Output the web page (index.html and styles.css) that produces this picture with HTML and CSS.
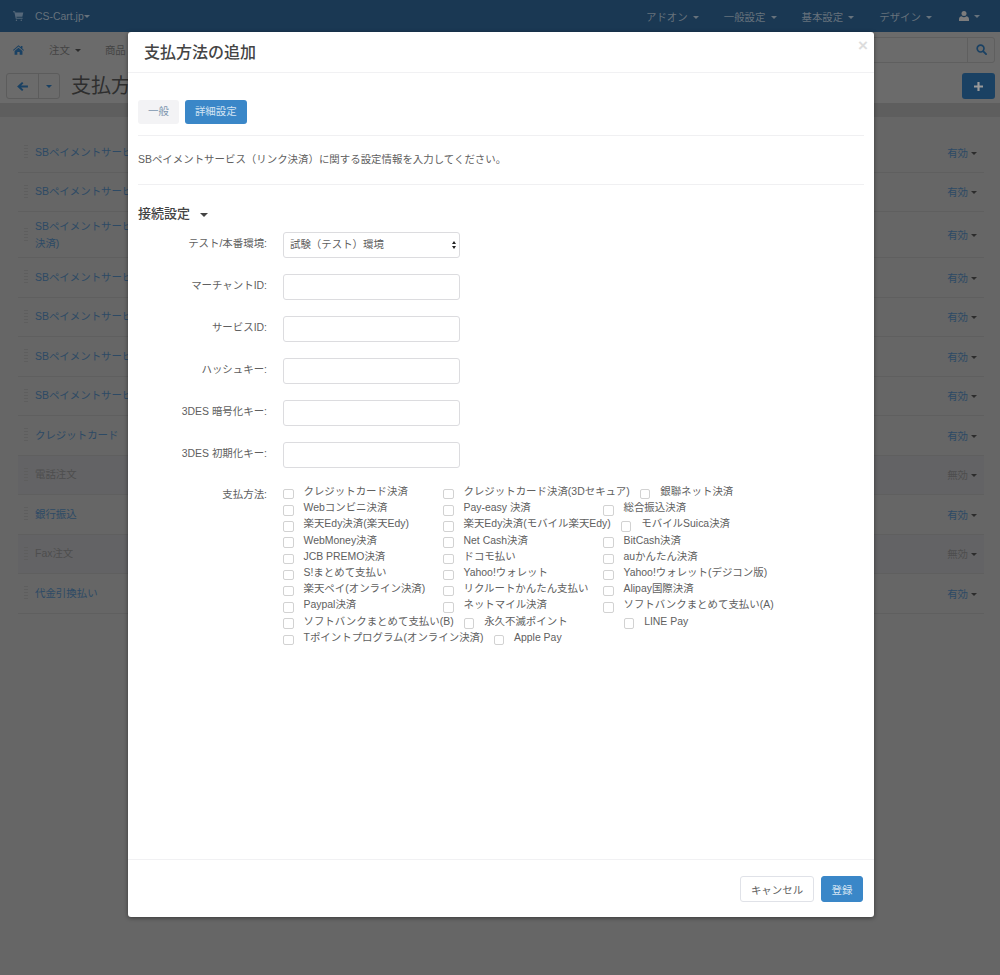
FILE: index.html
```html
<!DOCTYPE html>
<html lang="ja">
<head>
<meta charset="utf-8">
<title>支払方法の追加</title>
<link rel="stylesheet" href="styles.css">
</head>
<body>
<div class="page">
  <header class="topbar">
    <div class="brand">
      <svg class="ico-cart" viewBox="0 0 16 14"><path d="M0 0h3l.5 2H15l-1.4 6H5l.3 1.5H14V11H4L2 1.5H0zM5 12a1 1 0 1 0 .01 0zM12 12a1 1 0 1 0 .01 0z"/></svg>
      <span class="brand-name">CS-Cart.jp</span><i class="caret caret-top tight"></i>
    </div>
    <nav class="topmenu">
      <span class="topitem">アドオン<i class="caret caret-top"></i></span>
      <span class="topitem">一般設定<i class="caret caret-top"></i></span>
      <span class="topitem">基本設定<i class="caret caret-top"></i></span>
      <span class="topitem">デザイン<i class="caret caret-top"></i></span>
      <span class="topitem user">
        <svg class="ico-user" viewBox="0 0 12 12"><circle cx="6" cy="3" r="3"/><path d="M0 12V9.5C0 7.5 1.5 6.5 3.2 6.2 4 7 5 7.4 6 7.4s2-.4 2.800-1.200C10.500 6.500 12 7.500 12 9.500V12z"/></svg><i class="caret caret-top"></i>
      </span>
    </nav>
  </header>
  <div class="subnav">
    <svg class="ico-home" viewBox="0 0 14 12"><path d="M7 0l3 2.600V1h2v3.300L14 6l-.8.900L7 1.700.8 6.900 0 6zM2 7.200L7 3l5 4.200V12H8.500V8.500h-3V12H2z"/></svg>
    <span class="subitem first">注文<i class="caret caret-dark"></i></span>
    <span class="subitem">商品</span>
    <div class="search">
      <span class="search-btn"><svg viewBox="0 0 12 12"><circle cx="5" cy="5" r="3.700" fill="none" stroke="currentColor" stroke-width="1.800"/><path d="M8 8l3 3" stroke="currentColor" stroke-width="2" stroke-linecap="round"/></svg></span>
    </div>
  </div>
  <div class="toolbar">
    <div class="btn-group">
      <span class="btn-back"><svg viewBox="0 0 12 10"><path d="M5.500 0L7 1.500 4.500 4H12v2H4.500L7 8.500 5.500 10 0 5z"/></svg></span>
      <span class="btn-drop"><i class="caret caret-blue"></i></span>
    </div>
    <h2 class="page-title">支払方法</h2>
    <span class="btn-add"><svg viewBox="0 0 10 10"><path d="M3.800 0h2.400v3.800H10v2.400H6.200V10H3.800V6.200H0V3.800h3.800z"/></svg></span>
  </div>
  <div class="strip"></div>
  <main class="content">
    <ul class="rows">
      <li class="row"><a class="row-name">SBペイメントサービス（リンク決済）</a><span class="status">有効<i class="caret caret-dark"></i></span></li>
      <li class="row"><a class="row-name">SBペイメントサービス（リンク決済）</a><span class="status">有効<i class="caret caret-dark"></i></span></li>
      <li class="row tall"><a class="row-name">SBペイメントサービス（クレジットカード<br>決済)</a><span class="status">有効<i class="caret caret-dark"></i></span></li>
      <li class="row"><a class="row-name">SBペイメントサービス（リンク決済）</a><span class="status">有効<i class="caret caret-dark"></i></span></li>
      <li class="row"><a class="row-name">SBペイメントサービス（リンク決済）</a><span class="status">有効<i class="caret caret-dark"></i></span></li>
      <li class="row"><a class="row-name">SBペイメントサービス（リンク決済）</a><span class="status">有効<i class="caret caret-dark"></i></span></li>
      <li class="row"><a class="row-name">SBペイメントサービス（リンク決済）</a><span class="status">有効<i class="caret caret-dark"></i></span></li>
      <li class="row"><a class="row-name">クレジットカード</a><span class="status">有効<i class="caret caret-dark"></i></span></li>
      <li class="row off"><a class="row-name">電話注文</a><span class="status">無効<i class="caret caret-dark"></i></span></li>
      <li class="row"><a class="row-name">銀行振込</a><span class="status">有効<i class="caret caret-dark"></i></span></li>
      <li class="row off"><a class="row-name">Fax注文</a><span class="status">無効<i class="caret caret-dark"></i></span></li>
      <li class="row"><a class="row-name">代金引換払い</a><span class="status">有効<i class="caret caret-dark"></i></span></li>
    </ul>
  </main>
</div>

<section class="modal">
  <div class="modal-head">
    <h3 class="modal-title">支払方法の追加</h3>
    <span class="close">×</span>
  </div>
  <div class="modal-body">
    <div class="tabs">
      <span class="tab">一般</span>
      <span class="tab active">詳細設定</span>
    </div>
    <p class="intro">SBペイメントサービス（リンク決済）に関する設定情報を入力してください。</p>
    <h4 class="section">接続設定<i class="caret caret-section"></i></h4>
    <div class="form">
      <div class="field">
        <label class="label">テスト/本番環境:</label>
        <div class="select-wrap"><select class="control select"><option>試験（テスト）環境</option></select></div>
      </div>
      <div class="field"><label class="label">マーチャントID:</label><input class="control" type="text"></div>
      <div class="field"><label class="label">サービスID:</label><input class="control" type="text"></div>
      <div class="field"><label class="label">ハッシュキー:</label><input class="control" type="text"></div>
      <div class="field"><label class="label">3DES 暗号化キー:</label><input class="control" type="text"></div>
      <div class="field"><label class="label">3DES 初期化キー:</label><input class="control" type="text"></div>
      <div class="field methods">
        <label class="label">支払方法:</label>
        <div class="checks">
          <div class="check-row">
            <label class="check"><input type="checkbox">クレジットカード決済</label>
            <label class="check"><input type="checkbox">クレジットカード決済(3Dセキュア)</label>
            <label class="check"><input type="checkbox">銀聯ネット決済</label>
          </div>
          <div class="check-row">
            <label class="check"><input type="checkbox">Webコンビニ決済</label>
            <label class="check"><input type="checkbox">Pay-easy 決済</label>
            <label class="check"><input type="checkbox">総合振込決済</label>
          </div>
          <div class="check-row">
            <label class="check"><input type="checkbox">楽天Edy決済(楽天Edy)</label>
            <label class="check"><input type="checkbox">楽天Edy決済(モバイル楽天Edy)</label>
            <label class="check"><input type="checkbox">モバイルSuica決済</label>
          </div>
          <div class="check-row">
            <label class="check"><input type="checkbox">WebMoney決済</label>
            <label class="check"><input type="checkbox">Net Cash決済</label>
            <label class="check"><input type="checkbox">BitCash決済</label>
          </div>
          <div class="check-row">
            <label class="check"><input type="checkbox">JCB PREMO決済</label>
            <label class="check"><input type="checkbox">ドコモ払い</label>
            <label class="check"><input type="checkbox">auかんたん決済</label>
          </div>
          <div class="check-row">
            <label class="check"><input type="checkbox">S!まとめて支払い</label>
            <label class="check"><input type="checkbox">Yahoo!ウォレット</label>
            <label class="check"><input type="checkbox">Yahoo!ウォレット(デジコン版)</label>
          </div>
          <div class="check-row">
            <label class="check"><input type="checkbox">楽天ペイ(オンライン決済)</label>
            <label class="check"><input type="checkbox">リクルートかんたん支払い</label>
            <label class="check"><input type="checkbox">Alipay国際決済</label>
          </div>
          <div class="check-row">
            <label class="check"><input type="checkbox">Paypal決済</label>
            <label class="check"><input type="checkbox">ネットマイル決済</label>
            <label class="check"><input type="checkbox">ソフトバンクまとめて支払い(A)</label>
          </div>
          <div class="check-row">
            <label class="check"><input type="checkbox">ソフトバンクまとめて支払い(B)</label>
            <label class="check"><input type="checkbox">永久不滅ポイント</label>
            <label class="check"><input type="checkbox">LINE Pay</label>
          </div>
          <div class="check-row">
            <label class="check"><input type="checkbox">Tポイントプログラム(オンライン決済)</label>
            <label class="check"><input type="checkbox">Apple Pay</label>
          </div>
        </div>
      </div>
    </div>
  </div>
  <div class="modal-foot">
    <button class="btn-cancel" type="button">キャンセル</button>
    <button class="btn-save" type="button">登録</button>
  </div>
</section>
</body>
</html>
```
FILE: styles.css
```css
* { box-sizing: border-box; }
html, body { margin: 0; height: 975px; overflow: hidden; }
body {
  background: #666;
  font-family: "Liberation Sans", "Noto Sans CJK JP", sans-serif;
  font-size: 10.45px;
  color: #606060;
  position: relative;
}
h2, h3, h4, p, ul { margin: 0; padding: 0; }
i { font-style: normal; }

.caret { display: inline-block; width: 0; height: 0; border-left: 3px solid transparent; border-right: 3px solid transparent; border-top: 3px solid currentColor; margin-left: 5px; vertical-align: 2px; }
.caret-top { color: #67727c; }
.caret-top.tight { margin-left: 0; }
.caret-dark { color: #2c2c2c; }
.caret-blue { color: #1a4163; }
.caret-section { color: #444; margin-left: 10px; border-left-width: 4px; border-right-width: 4px; border-top-width: 4px; vertical-align: 1px; }

.page { height: 975px; display: flex; flex-direction: column; }

.topbar { height: 32px; background: #1a3853; display: flex; align-items: center; justify-content: space-between; padding: 0 20px 0 13px; color: #67727c; flex: none; }
.brand { display: flex; align-items: center; }
.ico-cart { width: 11px; height: 10px; fill: #56687a; margin-right: 11px; }
.topmenu { display: flex; align-items: center; gap: 25px; }
.topitem { white-space: nowrap; }
.topitem.user { margin-left: 2px; display: flex; align-items: center; }
.ico-user { width: 10px; height: 10px; fill: #7d7d7d; }
.topitem.user .caret { vertical-align: 0; }

.subnav { height: 32px; background: #6b6b6b; display: flex; align-items: center; padding: 3px 5px 0 13px; color: #444; flex: none; }
.ico-home { width: 11px; height: 10px; fill: #1a4163; }
.subitem.first { margin-left: 25px; }
.subitem { margin-right: 24px; }
.search { margin-left: auto; width: 300px; height: 26px; border: 1px solid #5f5f5f; border-radius: 3px; display: flex; justify-content: flex-end; }
.search-btn { width: 27px; border-left: 1px solid #5f5f5f; color: #1a4163; display: flex; align-items: center; justify-content: center; }
.search-btn svg { width: 11px; height: 11px; }

.toolbar { height: 39px; background: #6b6b6b; display: flex; align-items: center; padding: 5px 5px 0 6px; flex: none; }
.btn-group { display: flex; height: 26px; border: 1px solid #5c5c5c; border-radius: 3px; }
.btn-back { width: 32px; display: flex; align-items: center; justify-content: center; border-right: 1px solid #5c5c5c; }
.btn-back svg { width: 11px; height: 9px; fill: #1a4163; }
.btn-drop { width: 20px; display: flex; align-items: center; justify-content: center; }
.btn-drop .caret { margin: 0; }
.page-title { font-size: 20px; font-weight: 400; color: #2e2e2e; margin: 0 0 3px 11px; }
.btn-add { margin-left: auto; width: 33px; height: 26px; background: #1a4163; border-radius: 3px; display: flex; align-items: center; justify-content: center; }
.btn-add svg { width: 9px; height: 9px; fill: #9a9a9a; }

.strip { height: 14px; background: #5e5e5e; flex: none; }
.content { flex: 1; background: #666; padding: 16px 16px 0 18px; }
.rows { list-style: none; }
.row { height: 39.5px; display: flex; align-items: center; justify-content: space-between; padding: 0 7px 0 17px; border-bottom: 1px solid #5f5f5f; position: relative; }
.row::before { content: ""; position: absolute; left: 6px; top: 50%; width: 4px; height: 15px; margin-top: -8px; background: radial-gradient(circle, #5e5e5e 0.6px, transparent 0.7px) 0 0 / 2px 3px; }
.row.tall { height: 46px; }
.row.off { background: #636365; }
.row-name { color: #2d4a65; line-height: 17px; white-space: nowrap; max-width: 93px; overflow: hidden; }
.row.off .row-name { color: #4e4e4e; }
.status { color: #2d4a65; }
.status .caret { margin-left: 3px; }
.row.off .status { color: #4e4e4e; }

.modal { position: absolute; left: 128px; top: 32px; width: 746px; height: 885px; background: #fff; border-radius: 3px; box-shadow: 0 1px 4px rgba(0,0,0,.45); display: flex; flex-direction: column; }
.modal-head { height: 41px; border-bottom: 1px solid #f1f1f3; padding: 0 16px 2px; display: flex; align-items: center; justify-content: space-between; flex: none; }
.modal-title { font-size: 16px; font-weight: 500; color: #444; }
.close { font-size: 17px; font-weight: 700; color: #ddd; align-self: flex-start; margin: 5px -10px 0 0; line-height: 18px; }

.modal-body { flex: 1; padding: 27px 10px 0; }
.tabs { display: flex; gap: 6px; padding-bottom: 11px; border-bottom: 1px solid #f0f0f2; }
.tab { height: 24px; line-height: 24px; padding: 0 10px; border-radius: 3px; background: #f3f3f5; color: #7b93ad; }
.tab.active { background: #3a87c8; color: #d4e4f3; }
.intro { height: 49px; padding-top: 15px; line-height: 17px; border-bottom: 1px solid #f0f0f2; }
.section { font-size: 13px; font-weight: 500; color: #444; margin-top: 20px; line-height: 18px; }

.form { margin-top: 9px; }
.field { display: flex; margin-bottom: 16px; align-items: center; }
.label { width: 129px; text-align: right; margin: 0 16px 6px 0; flex: none; }
.control { width: 177px; height: 26px; border: 1px solid #dcdcdf; border-radius: 3px; background: #fff; padding: 0 6px 2px; font: inherit; color: #606060; display: block; }
.select-wrap { position: relative; }
.select { appearance: none; -webkit-appearance: none; }
.select-wrap::before, .select-wrap::after { content: ""; position: absolute; right: 4px; width: 0; height: 0; border-left: 2.500px solid transparent; border-right: 2.500px solid transparent; }
.select-wrap::before { top: 9px; border-bottom: 3.500px solid #222; }
.select-wrap::after { top: 14px; border-top: 3.500px solid #222; }

.methods { align-items: flex-start; margin: 0; padding-top: 1px; }
.methods .label { line-height: 16px; padding-top: 2px; margin-bottom: 0; }
.checks { display: flex; flex-direction: column; margin-top: -1px; }
.check-row { display: flex; height: 16.2px; }
.check { min-width: 160px; padding-right: 10px; display: flex; align-items: center; white-space: nowrap; line-height: 16px; }
.check input { appearance: none; -webkit-appearance: none; width: 10.500px; height: 10.500px; margin: 4px 10px 0 0; border: 1px solid #d2d2d2; border-radius: 2px; background: #fff; flex: none; }

.modal-foot { height: 58px; border-top: 1px solid #f1f1f3; display: flex; justify-content: flex-end; align-items: flex-start; gap: 7px; padding: 16px 11px 0 0; flex: none; }
.modal-foot button { height: 26px; border-radius: 3px; font: inherit; padding: 0; }
.btn-cancel { width: 74px; background: #fff; border: 1px solid #e0e2e8; color: #606060; }
.btn-save { width: 42px; background: #3a87c8; border: 1px solid #3a87c8; color: #d4e4f3; }
```
